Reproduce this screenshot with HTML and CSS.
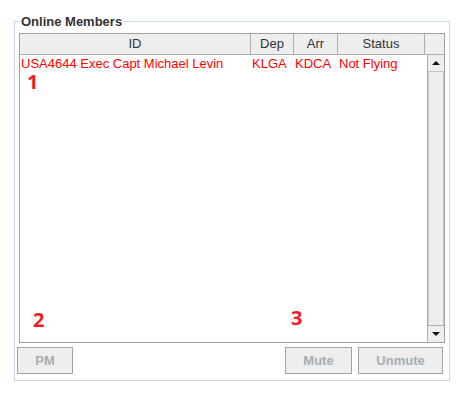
FILE: index.html
```html
<!DOCTYPE html>
<html lang="en">
<head>
    <meta charset="UTF-8">
    <title>Online Members</title>
    <link rel="stylesheet" href="styles.css">
</head>
<body>

    <fieldset class="members">
        <legend>Online Members</legend>

        <div class="table-box">
            <div class="table-head">
                <div class="th col-id">ID</div>
                <div class="th col-dep">Dep</div>
                <div class="th col-arr">Arr</div>
                <div class="th col-status">Status</div>
                <div class="th col-corner"></div>
            </div>
            <div class="table-body">
                <div class="rows">
                    <div class="row">
                        <div class="td col-id">USA4644 Exec Capt Michael Levin</div>
                        <div class="td col-dep">KLGA</div>
                        <div class="td col-arr">KDCA</div>
                        <div class="td col-status">Not Flying</div>
                    </div>
                </div>
                <div class="scrollbar">
                    <div class="scroll-btn"><span class="arrow-up"></span></div>
                    <div class="scroll-thumb"></div>
                    <div class="scroll-btn"><span class="arrow-down"></span></div>
                </div>
            </div>
        </div>

        <div class="actions">
            <button class="btn btn-pm" disabled>PM</button>
            <span class="spacer"></span>
            <button class="btn btn-mute" disabled>Mute</button>
            <button class="btn btn-unmute" disabled>Unmute</button>
        </div>
    </fieldset>

    <!-- annotations -->
    <span class="mark mark-1">1</span>
    <span class="mark mark-2">2</span>
    <span class="mark mark-3">3</span>

</body>
</html>
```

FILE: styles.css
```css
body {
    margin: 0;
    padding: 14px 0 0 14px;
    background-color: #fff;
    font-family: "Liberation Sans", Arial, sans-serif;
    font-size: 13px;
    color: #333;
    position: relative;
    height: 389px;
}

.members {
    width: 436px;
    box-sizing: border-box;
    margin: 0;
    padding: 4px 4px 6px 2px;
    border: 1px solid #c9d8e8;
}

.members legend {
    padding: 0 1px;
    margin-left: 3px;
    font-weight: bold;
    font-size: 13px;
    line-height: 15px;
    color: #333;
}

.table-box {
    margin-left: 2px;
    height: 310px;
    box-sizing: border-box;
    border: 1px solid #9aa3ac;
    display: flex;
    flex-direction: column;
}

/* colonnes */
.col-id { width: 231px; }
.col-dep { width: 43px; }
.col-arr { width: 44px; }
.col-status { width: 87px; }
.col-corner { flex: 1; }

.table-head {
    display: flex;
    height: 21px;
    flex-shrink: 0;
}

.th {
    box-sizing: border-box;
    height: 21px;
    line-height: 20px;
    text-align: center;
    background-color: #eeeeee;
    border-right: 1px solid #a7afb7;
    border-bottom: 1px solid #a7afb7;
    color: #333;
}

.th.col-corner {
    border-right: none;
}

.table-body {
    flex: 1;
    display: flex;
    min-height: 0;
}

.rows {
    flex: 1;
    background-color: #fff;
}

.row {
    display: flex;
    height: 18px;
    line-height: 18px;
    color: #ff0000;
}

.td {
    box-sizing: border-box;
    padding-left: 1px;
    white-space: nowrap;
}

.row .col-dep,
.row .col-arr,
.row .col-status {
    padding-left: 1px;
}

.scrollbar {
    width: 17px;
    display: flex;
    flex-direction: column;
    background-color: #eeeeee;
    border-left: 1px solid #a7afb7;
    box-sizing: border-box;
}

.scroll-btn {
    height: 17px;
    flex-shrink: 0;
    display: flex;
    align-items: center;
    justify-content: center;
    background-color: #eeeeee;
    border-bottom: 1px solid #c2c8ce;
    box-sizing: border-box;
}

.scroll-btn:last-child {
    border-top: 1px solid #a7afb7;
    border-bottom: none;
}

.scroll-thumb {
    flex: 1;
    background-color: #eeeeee;
    border-left: 1px solid #c2c8ce;
    border-right: 1px solid #c2c8ce;
}

.arrow-up {
    width: 0;
    height: 0;
    border-left: 4px solid transparent;
    border-right: 4px solid transparent;
    border-bottom: 4px solid #111;
}

.arrow-down {
    width: 0;
    height: 0;
    border-left: 4px solid transparent;
    border-right: 4px solid transparent;
    border-top: 4px solid #111;
}

.actions {
    display: flex;
    gap: 6px;
    margin-top: 4px;
    margin-right: 2px;
}

.spacer {
    flex: 1;
}

.btn {
    height: 27px;
    padding: 0;
    background-color: #eeeeee;
    border: 1px solid #a3a3a3;
    border-radius: 0;
    font-family: "Liberation Sans", Arial, sans-serif;
    font-size: 13px;
    font-weight: bold;
    color: #a5adb6;
}

.btn-pm { width: 56px; }
.btn-mute { width: 67px; }
.btn-unmute { width: 85px; }

.mark {
    position: absolute;
    font-family: "Open Sans", sans-serif;
    font-weight: bold;
    font-size: 20px;
    line-height: 15px;
    color: #ee1c25;
}

.mark-1 { left: 27px; top: 74px; }
.mark-2 { left: 33px; top: 312px; }
.mark-3 { left: 291px; top: 310px; }
```
